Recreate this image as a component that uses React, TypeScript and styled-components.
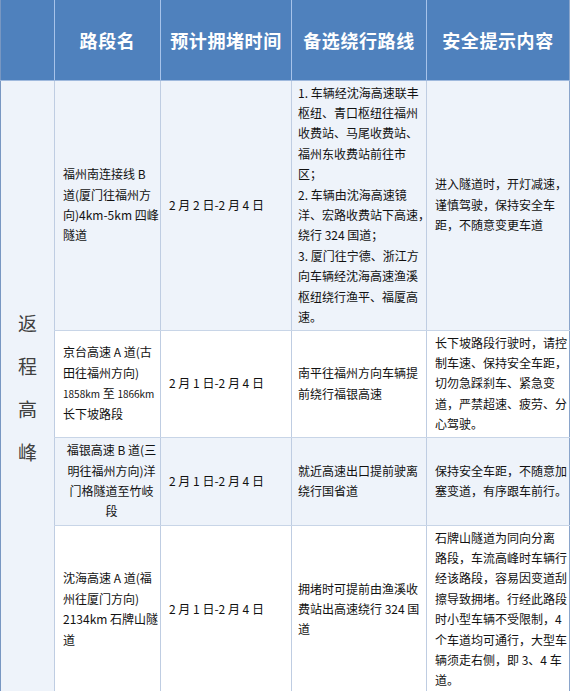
import React from "react";
import styled, { createGlobalStyle } from "styled-components";

const GlobalStyle = createGlobalStyle`
  html, body { margin: 0; padding: 0; background: #ffffff; }
  body { font-family: "Noto Sans CJK SC", "Noto Sans", sans-serif; }
`;

const Table = styled.table`
  width: 569px;
  table-layout: fixed;
  border-collapse: collapse;
  border-left: 1px solid #7897c2;
  border-right: 1px solid #8aa5cb;
`;

const HeadRow = styled.tr`
  height: 80px;
  background: #4f81bd;
`;

const HeadCell = styled.th`
  padding: 0;
  border-left: 1px solid #a7c3ea;
  border-bottom: 1px solid #9fb9dd;
  color: #ffffff;
  font-size: 18px;
  font-weight: 700;
  letter-spacing: 0.6px;
  text-align: center;
  vertical-align: middle;
  &:first-child { border-left: none; }
`;

const Row = styled.tr<{ $shade: boolean; $h: number }>`
  height: ${(p) => p.$h}px;
  background: ${(p) => (p.$shade ? "#eef3fa" : "#ffffff")};
`;

const SideCell = styled.td`
  background: #eef3fa;
  border-bottom: 1px solid #c8d5e7;
  color: #404040;
  font-size: 19px;
  line-height: 43px;
  text-align: center;
  vertical-align: middle;
  padding: 0;
`;

const Cell = styled.td<{ $center?: boolean; $pl?: number }>`
  border-left: 1px solid #bfcde2;
  border-bottom: 1px solid #c8d5e7;
  padding: 2px 0 2px ${(p) => p.$pl ?? 7}px;
  color: #111111;
  font-size: 12px;
  line-height: 20.4px;
  white-space: nowrap;
  text-align: ${(p) => (p.$center ? "center" : "left")};
  vertical-align: middle;
  overflow: visible;
`;

const Small = styled.span`
  font-size: 10px;
`;

type Line = React.ReactNode;

const Lines: React.FC<{ lines: Line[] }> = ({ lines }) => (
  <>
    {lines.map((l, i) => (
      <React.Fragment key={i}>
        {i > 0 && <br />}
        {l}
      </React.Fragment>
    ))}
  </>
);

type RowData = {
  h: number;
  shade: boolean;
  name: Line[];
  nameCenter?: boolean;
  time: string;
  route: Line[];
  tip: Line[];
};

const rows: RowData[] = [
  {
    h: 250,
    shade: true,
    name: ["福州南连接线 B", "道(厦门往福州方", "向)4km-5km 四峰", "隧道"],
    time: "2 月 2 日-2 月 4 日",
    route: [
      "1. 车辆经沈海高速联丰",
      "枢纽、青口枢纽往福州",
      "收费站、马尾收费站、",
      "福州东收费站前往市",
      "区；",
      "2. 车辆由沈海高速镜",
      "洋、宏路收费站下高速，",
      "绕行 324 国道；",
      "3. 厦门往宁德、浙江方",
      "向车辆经沈海高速渔溪",
      "枢纽绕行渔平、福厦高",
      "速。",
    ],
    tip: ["进入隧道时，开灯减速，", "谨慎驾驶，保持安全车", "距，不随意变更车道"],
  },
  {
    h: 105,
    shade: false,
    name: [
      "京台高速 A 道(古",
      "田往福州方向)",
      <>
        <Small>1858km</Small> 至 <Small>1866km</Small>
      </>,
      "长下坡路段",
    ],
    time: "2 月 1 日-2 月 4 日",
    route: ["南平往福州方向车辆提", "前绕行福银高速"],
    tip: [
      "长下坡路段行驶时，请控",
      "制车速、保持安全车距，",
      "切勿急踩刹车、紧急变",
      "道，严禁超速、疲劳、分",
      "心驾驶。",
    ],
  },
  {
    h: 88,
    shade: true,
    name: ["福银高速 B 道(三", "明往福州方向)洋", "门格隧道至竹岐", "段"],
    nameCenter: true,
    time: "2 月 1 日-2 月 4 日",
    route: ["就近高速出口提前驶离", "绕行国省道"],
    tip: ["保持安全车距，不随意加", "塞变道，有序跟车前行。"],
  },
  {
    h: 168,
    shade: false,
    name: ["沈海高速 A 道(福", "州往厦门方向)", "2134km 石牌山隧", "道"],
    time: "2 月 1 日-2 月 4 日",
    route: ["拥堵时可提前由渔溪收", "费站出高速绕行 324 国", "道"],
    tip: [
      "石牌山隧道为同向分离",
      "路段，车流高峰时车辆行",
      "经该路段，容易因变道刮",
      "擦导致拥堵。行经此路段",
      "时小型车辆不受限制，4",
      "个车道均可通行，大型车",
      "辆须走右侧，即 3、4 车",
      "道。",
    ],
  },
];

export default function App() {
  return (
    <>
      <GlobalStyle />
      <Table>
        <colgroup>
          <col style={{ width: 54 }} />
          <col style={{ width: 106 }} />
          <col style={{ width: 131 }} />
          <col style={{ width: 135 }} />
          <col style={{ width: 143 }} />
        </colgroup>
        <thead>
          <HeadRow>
            <HeadCell></HeadCell>
            <HeadCell>路段名</HeadCell>
            <HeadCell>预计拥堵时间</HeadCell>
            <HeadCell>备选绕行路线</HeadCell>
            <HeadCell>安全提示内容</HeadCell>
          </HeadRow>
        </thead>
        <tbody>
          {rows.map((r, i) => (
            <Row key={i} $shade={r.shade} $h={r.h}>
              {i === 0 && (
                <SideCell rowSpan={rows.length}>
                  返<br />程<br />高<br />峰
                </SideCell>
              )}
              <Cell $center={r.nameCenter} $pl={8}>
                <Lines lines={r.name} />
              </Cell>
              <Cell $pl={8}>{r.time}</Cell>
              <Cell $pl={6}>
                <Lines lines={r.route} />
              </Cell>
              <Cell $pl={8}>
                <Lines lines={r.tip} />
              </Cell>
            </Row>
          ))}
        </tbody>
      </Table>
    </>
  );
}
